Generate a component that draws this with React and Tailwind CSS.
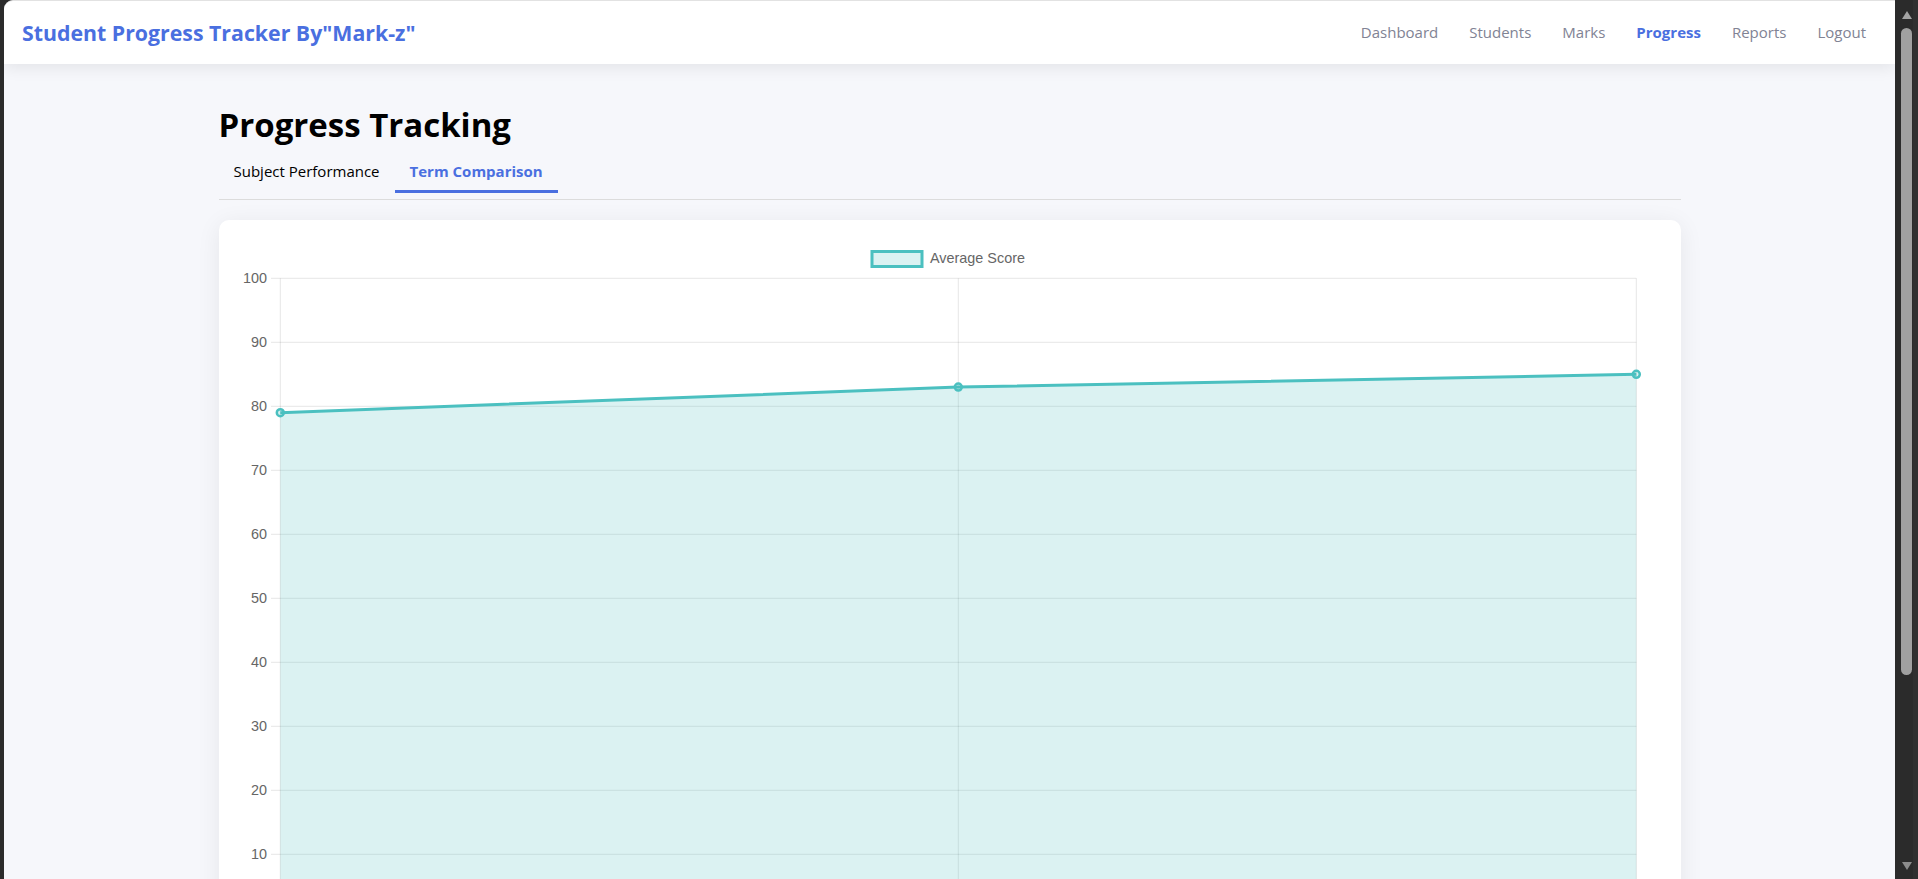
import React from 'react';

const navLinks = ['Dashboard', 'Students', 'Marks', 'Progress', 'Reports', 'Logout'];
const yTicks = [100, 90, 80, 70, 60, 50, 40, 30, 20, 10];

// chart geometry, in card coordinates
const PLOT_L = 61.3;
const PLOT_R = 1417.3;
const PLOT_T = 58.3;
const UNIT = 6.4;
const data = [79, 83, 85];

const yOf = (v) => PLOT_T + (100 - v) * UNIT;
const xOf = (i) => PLOT_L + (i * (PLOT_R - PLOT_L)) / (data.length - 1);

const TermChart = () => {
  const pts = data.map((v, i) => [xOf(i), yOf(v)]);
  const line = pts.map((p, i) => `${i ? 'L' : 'M'}${p[0]} ${p[1]}`).join(' ');
  const area = `${line} L${PLOT_R} ${yOf(0)} L${PLOT_L} ${yOf(0)} Z`;

  return (
    <svg width="1462" height="700" className="block" style={{ fontFamily: '"Liberation Sans", Arial, sans-serif' }}>
      {/* legend */}
      <rect x="653" y="31.5" width="50" height="15" fill="rgba(75,192,192,0.2)" stroke="#4bc0c0" strokeWidth="3" />
      <text x="711" y="43" fontSize="14.4" fill="#666">Average Score</text>

      {/* grid */}
      {yTicks.map((t) => (
        <g key={t}>
          <line x1="52" x2={PLOT_R} y1={yOf(t)} y2={yOf(t)} stroke="rgba(0,0,0,0.1)" strokeWidth="1" />
          <text x="48" y={yOf(t) + 5} fontSize="14.4" fill="#666" textAnchor="end">{t}</text>
        </g>
      ))}
      {[0, 1, 2].map((i) => (
        <line key={i} x1={xOf(i)} x2={xOf(i)} y1={PLOT_T} y2={yOf(0) + 8} stroke="rgba(0,0,0,0.1)" strokeWidth="1" />
      ))}

      {/* dataset */}
      <path d={area} fill="rgba(75,192,192,0.2)" />
      <path d={line} fill="none" stroke="#4bc0c0" strokeWidth="3" strokeLinejoin="round" />
      {pts.map((p, i) => (
        <circle key={i} cx={p[0]} cy={p[1]} r="3.5" fill="rgba(75,192,192,0.2)" stroke="#4bc0c0" strokeWidth="2.5" />
      ))}
    </svg>
  );
};

const Scrollbar = () => (
  <div className="w-[23px] flex-shrink-0 bg-[#2b2b2b] flex flex-col items-center border-r-[5px] border-[#303030]">
    <svg width="12" height="10" viewBox="0 0 12 10" className="mt-[10px] ml-[5px]">
      <path d="M6 1 L11 9 L1 9 Z" fill="#a3a3a3" />
    </svg>
    <div className="mt-[8px] ml-[5px] w-[11px] h-[647px] rounded-full bg-[#a0a0a0]" />
    <div className="flex-1" />
    <svg width="12" height="10" viewBox="0 0 12 10" className="mb-[8px] ml-[5px]">
      <path d="M1 1 L11 1 L6 9 Z" fill="#8c8c8c" />
    </svg>
  </div>
);

export default function App() {
  return (
    <div
      className="h-[879px] w-full overflow-hidden bg-[#2b2b2b] flex"
      style={{ fontFamily: '"Open Sans", "Noto Sans", sans-serif' }}
    >
      <div className="w-[4px] flex-shrink-0" />
      <main className="flex-1 min-w-0 bg-[#f6f7fb] rounded-tl-[9px] overflow-hidden border-t border-[#e2e2e2]">
        {/* Navbar */}
        <nav className="relative z-10 h-[63px] bg-white flex items-center justify-between pl-[18px] pr-[29px] shadow-[0_4px_16px_rgba(0,0,0,0.08)] rounded-tl-[9px]">
          <h1 className="text-[21.3px] font-bold text-[#4a6fe0]">Student Progress Tracker By"Mark-z"</h1>
          <ul className="flex items-center gap-[31px] text-[15px]">
            {navLinks.map((l) => (
              <li
                key={l}
                className={l === 'Progress' ? 'font-bold text-[#4a6fe0]' : 'text-[#818394]'}
              >
                {l}
              </li>
            ))}
          </ul>
        </nav>

        {/* Content */}
        <div className="max-w-[1462px] mx-auto">
          <h2 className="mt-[41px] text-[33px] leading-[40px] font-bold text-black">Progress Tracking</h2>

          <div className="mt-[7px] flex border-b border-[#dcdcdc] pb-[6px]">
            <button className="px-[15px] pt-[9px] pb-[9px] leading-[20px] text-[15px] text-black border-b-[3px] border-transparent">
              Subject Performance
            </button>
            <button className="px-[15px] pt-[9px] pb-[9px] leading-[20px] text-[15px] font-bold text-[#4a6fe0] border-b-[3px] border-[#4a6fe0]">
              Term Comparison
            </button>
          </div>

          <section className="mt-[20px] bg-white rounded-[10px] shadow-[0_4px_24px_rgba(0,0,0,0.07)]">
            <TermChart />
          </section>
        </div>
      </main>
      <Scrollbar />
    </div>
  );
}
